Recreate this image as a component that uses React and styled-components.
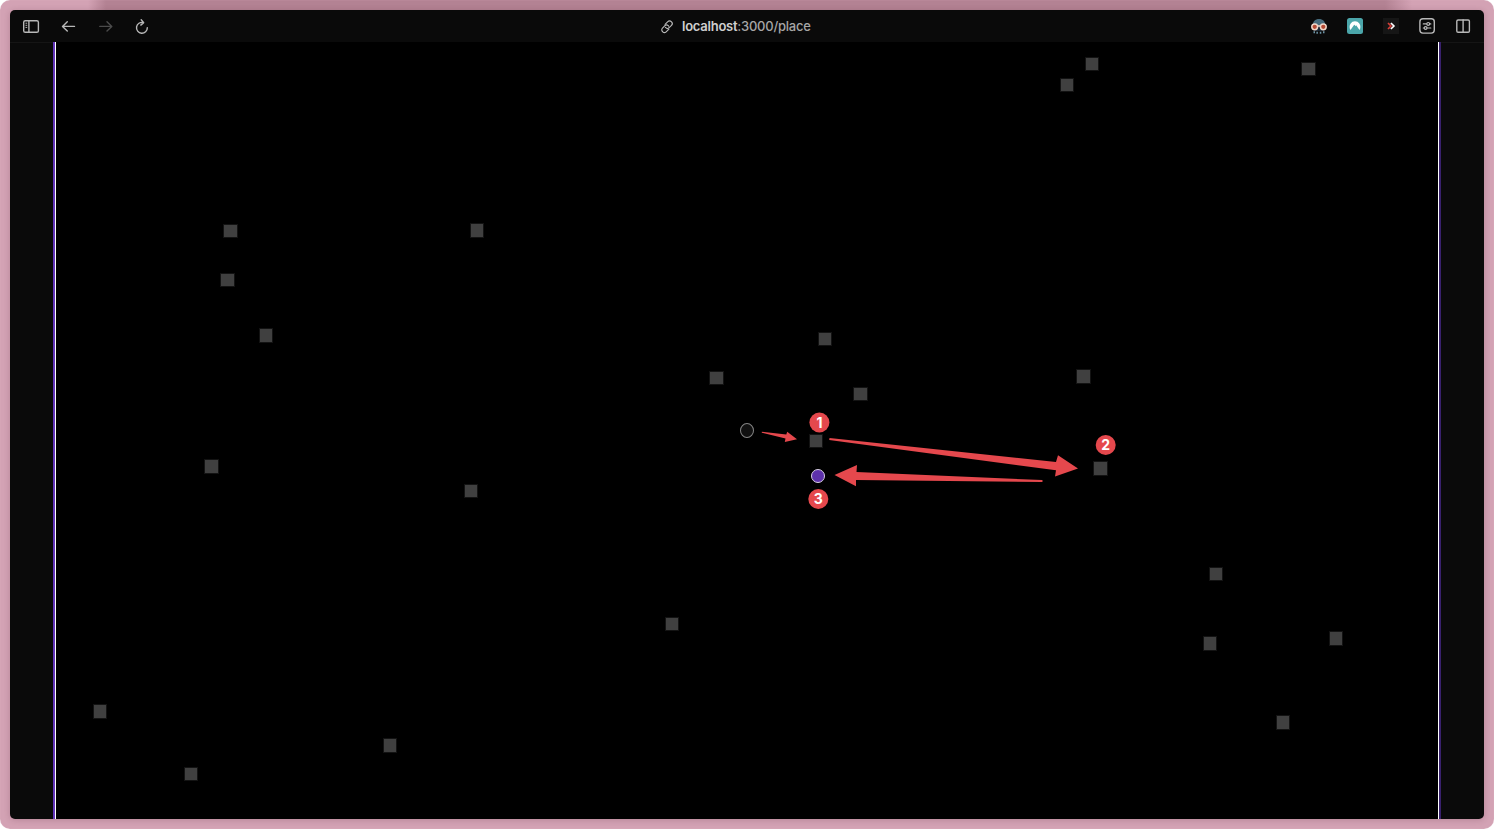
import React from 'react';
import styled, { createGlobalStyle } from 'styled-components';

const Global = createGlobalStyle`
  * { box-sizing: border-box; }
  body { margin: 0; background: #fff; overflow: hidden; font-family: Inter, "Liberation Sans", sans-serif; }
`;

const Frame = styled.div`
  width: 1494px;
  height: 829px;
  padding: 10px;
  border-radius: 10px;
  overflow: hidden;
  background:
    linear-gradient(90deg, transparent 88px, #b38293 106px, #b38293 1385px, transparent 1412px) top / 100% 12px no-repeat,
    #d3a2b4;
  box-shadow: inset 0 0 1px rgba(235, 205, 216, 0.8);
`;

const Window = styled.div`
  display: flex;
  flex-direction: column;
  height: 809px;
  border-radius: 5px;
  overflow: hidden;
  background: #0a0a0a;
  box-shadow: 0 1px 6px rgba(70, 20, 40, 0.2);
`;

const Toolbar = styled.header`
  display: grid;
  grid-template-columns: 1fr auto 1fr;
  align-items: center;
  height: 32px;
  flex: none;
  padding: 0 12px;
`;

const Tools = styled.div`
  display: flex;
  align-items: center;
  justify-content: ${p => (p.$end ? 'flex-end' : 'flex-start')};
  gap: ${p => p.$gap}px;
`;

const Icon = styled.svg`
  display: block;
  width: 18px;
  height: 18px;
  flex: none;
  fill: none;
  stroke: ${p => (p.$dim ? '#4b4b4b' : '#b8b8b8')};
  stroke-width: 1.4;
  stroke-linecap: round;
  stroke-linejoin: round;
`;

const Address = styled.div`
  display: flex;
  align-items: center;
  gap: 6px;
  margin-right: 24px;
  color: #a6a6a6;
  font-size: 13px;
  font-weight: 500;
  line-height: 16px;
  white-space: nowrap;
`;

const Url = styled.span`
  display: block;
  width: 130px;
  letter-spacing: -0.24px;
  b { font-weight: 600; color: #cfcfcf; }
`;

const Page = styled.main`
  display: flex;
  flex: 1;
  justify-content: center;
  min-height: 0;
  box-shadow: inset 0 1px #151515;
`;

const Board = styled.section`
  position: relative;
  width: 1388px;
  background: #000;
  border-left: 2px solid #6235bb;
  border-right: 2px solid #38206c;
  box-shadow: inset 1px 0 #fff, inset -1px 0 #fff;
`;

/* A centre that falls between two pixels takes an odd side, so edges stay crisp. */
const side = centre => (centre % 1 ? 15 : 14);

const Block = styled.div`
  position: absolute;
  left: ${p => p.$x - 55 - side(p.$x) / 2}px;
  top: ${p => p.$y - 42 - side(p.$y) / 2}px;
  width: ${p => side(p.$x)}px;
  height: ${p => side(p.$y)}px;
  background: #404040;
  border: 1px solid #131313;
`;

const Ball = styled.div`
  position: absolute;
  left: ${p => p.$x - 62}px;
  top: ${p => p.$y - 42 - side(p.$y) / 2}px;
  width: 14px;
  height: ${p => side(p.$y)}px;
  border-radius: 50%;
  background: ${p => (p.$active ? '#5d31ab' : '#111')};
  border: 1px solid ${p => (p.$active ? '#d8d0e3' : '#858585')};
`;

const Marks = styled.svg`
  position: absolute;
  left: 0;
  top: 0;
  width: 1384px;
  height: 777px;
  fill: #e5484d;
`;

const BadgeText = styled.text`
  fill: #fff;
  font-size: 14px;
  font-weight: 700;
  text-anchor: middle;
`;

const blocks = [
  [1092, 64], [1067, 85], [1308.5, 69], [230.5, 231], [477, 230.5], [227.5, 280],
  [266, 335.5], [825, 339], [716.5, 378], [860.5, 394], [1083.5, 376.5], [816, 441],
  [1100.5, 468.5], [211.5, 466.5], [471, 491], [1216, 574], [672, 624], [1210, 643.5],
  [1336, 638.5], [100, 711.5], [1283, 722.5], [390, 745.5], [191, 774],
];

const badges = [[819.4, 422.5, 1], [1105.7, 445, 2], [818.3, 499, 3]];

function SidebarIcon() {
  return (
    <Icon viewBox="0 0 18 18">
      <rect x="1.7" y="3.7" width="14.700" height="11.600" rx="1.6" />
      <path d="M6.900 3.700v11.600" />
      <path d="M3.900 6.200h.9M3.900 8.300h.9M3.900 10.400h.9" strokeWidth="1" />
    </Icon>
  );
}

function ArrowIcon({ forward }) {
  return (
    <Icon viewBox="0 0 18 18" $dim={forward}>
      {forward
        ? <path d="M3.800 9.400h12M11 4.700l4.800 4.700-4.800 4.700" />
        : <path d="M15.500 9.400h-12M8.300 4.700 3.500 9.400l4.800 4.700" />}
    </Icon>
  );
}

function ReloadIcon() {
  return (
    <Icon viewBox="0 0 18 18">
      <path d="M10.300 5.600A5.400 5.400 0 1 0 14.300 10.700M8.200 2.800l2.500 2.800-2.900 2.500" />
    </Icon>
  );
}

function LinkIcon() {
  return (
    <Icon viewBox="0 0 18 18">
      <g transform="rotate(-45 9 9.700)" strokeWidth="1.150">
        <path d="M8.700 12.700H4.800a2.400 2.400 0 0 1-2.400-2.400v-.4a2.400 2.400 0 0 1 2.400-2.400h3.400a2.400 2.400 0 0 1 2.400 2.400v.5" />
        <path d="M9.300 6.700h3.900a2.400 2.400 0 0 1 2.400 2.400v.4a2.400 2.400 0 0 1-2.400 2.400H9.800a2.400 2.400 0 0 1-2.400-2.400V9" />
      </g>
    </Icon>
  );
}

function IncognitoFaceIcon() {
  return (
    <Icon viewBox="0 0 18 18">
      <g stroke="none">
        <path d="M2.700 9C2.500 4.500 5.200 2 9 2s6.500 2.500 6.300 7z" fill="#466b7c" />
        <path d="M3.500 9h11l-.8 5h-9.400z" fill="#182633" />
        <path d="M3.500 14.300h1.500v2H3.500zM6.400 14.700h1.500v2H6.400zM9.800 14.700h1.500v2H9.800zM13 14.300h1.500v2H13z" fill="#6d93a5" />
      </g>
      <circle cx="4.700" cy="9.800" r="2.900" fill="#b54a34" stroke="#efd6c8" strokeWidth="1.500" />
      <circle cx="13.300" cy="9.800" r="2.900" fill="#b54a34" stroke="#efd6c8" strokeWidth="1.500" />
      <path d="M7.800 9h2.400" stroke="#efd6c8" />
    </Icon>
  );
}

function MountainIcon() {
  return (
    <Icon viewBox="0 0 18 18">
      <g stroke="none">
        <rect x="1" y="1" width="16" height="16" rx="2.500" fill="#4ba6aa" />
        <path d="M4.500 12.900C3.400 11.500 3.200 8.700 4.500 6.700c2.200-3.300 6.800-3.300 9 0 1.300 2 1.100 4.800 0 6.200L10.200 8.300 9.500 9.200 9 8.300 8.200 7.700z" fill="#fff" />
      </g>
    </Icon>
  );
}

function ChevronsIcon() {
  return (
    <Icon viewBox="0 0 18 18">
      <rect x="1" y="1" width="16" height="16" fill="#161616" stroke="none" />
      <g strokeLinecap="butt" strokeLinejoin="miter" strokeWidth="1.700">
        <path d="m6 6 3 3-3 3" stroke="#d53e38" />
        <path d="m8.900 6 3 3-3 3" stroke="#fff" />
      </g>
    </Icon>
  );
}

function ControlsIcon() {
  return (
    <Icon viewBox="0 0 18 18">
      <rect x="1.900" y="1.700" width="14.400" height="14.400" rx="3" />
      <g strokeWidth="1.200">
        <path d="M5.300 6.900h3.300M11.600 6.900h1.200M5.300 11h.8M9.100 11h3.700" />
        <circle cx="10.200" cy="6.900" r="1.400" />
        <circle cx="7.600" cy="11" r="1.400" />
      </g>
    </Icon>
  );
}

function SplitIcon() {
  return (
    <Icon viewBox="0 0 18 18">
      <rect x="2.800" y="3" width="12.600" height="12.200" rx="1.300" />
      <path d="M9.100 3v12.200" />
    </Icon>
  );
}

export default function App() {
  return (
    <>
      <Global />
      <Frame>
        <Window>
          <Toolbar>
            <Tools $gap={19}>
              <SidebarIcon />
              <ArrowIcon />
              <ArrowIcon forward />
              <ReloadIcon />
            </Tools>
            <Address>
              <LinkIcon />
              <Url><b>localhost</b>:3000/place</Url>
            </Address>
            <Tools $gap={18} $end>
              <IncognitoFaceIcon />
              <MountainIcon />
              <ChevronsIcon />
              <ControlsIcon />
              <SplitIcon />
            </Tools>
          </Toolbar>
          <Page>
            <Board>
              {blocks.map(([x, y]) => <Block key={`${x}-${y}`} $x={x} $y={y} />)}
              <Ball $x={747} $y={430.5} />
              <Ball $x={818} $y={476} $active />
              <Marks viewBox="55 42 1384 777">
                <path d="M761.800 431.700 786.300 434.500 787.200 431.800 797 439.200 784.800 442.100 785.500 438.500 761.800 432.700z" />
                <path d="M829.500 438 1056 462 1058 455.200 1078 468.500 1055 476.600 1056 470.300 829.200 440z" />
                <path d="M834.500 475 857 465 856.500 472 1042 480Q1043.500 481 1042 482L856 480 856 486.300z" />
                {badges.map(([x, y, n]) => (
                  <g key={n}>
                    <circle cx={x} cy={y} r="10" />
                    <BadgeText x={x} y={y + 5}>{n}</BadgeText>
                  </g>
                ))}
              </Marks>
            </Board>
          </Page>
        </Window>
      </Frame>
    </>
  );
}
